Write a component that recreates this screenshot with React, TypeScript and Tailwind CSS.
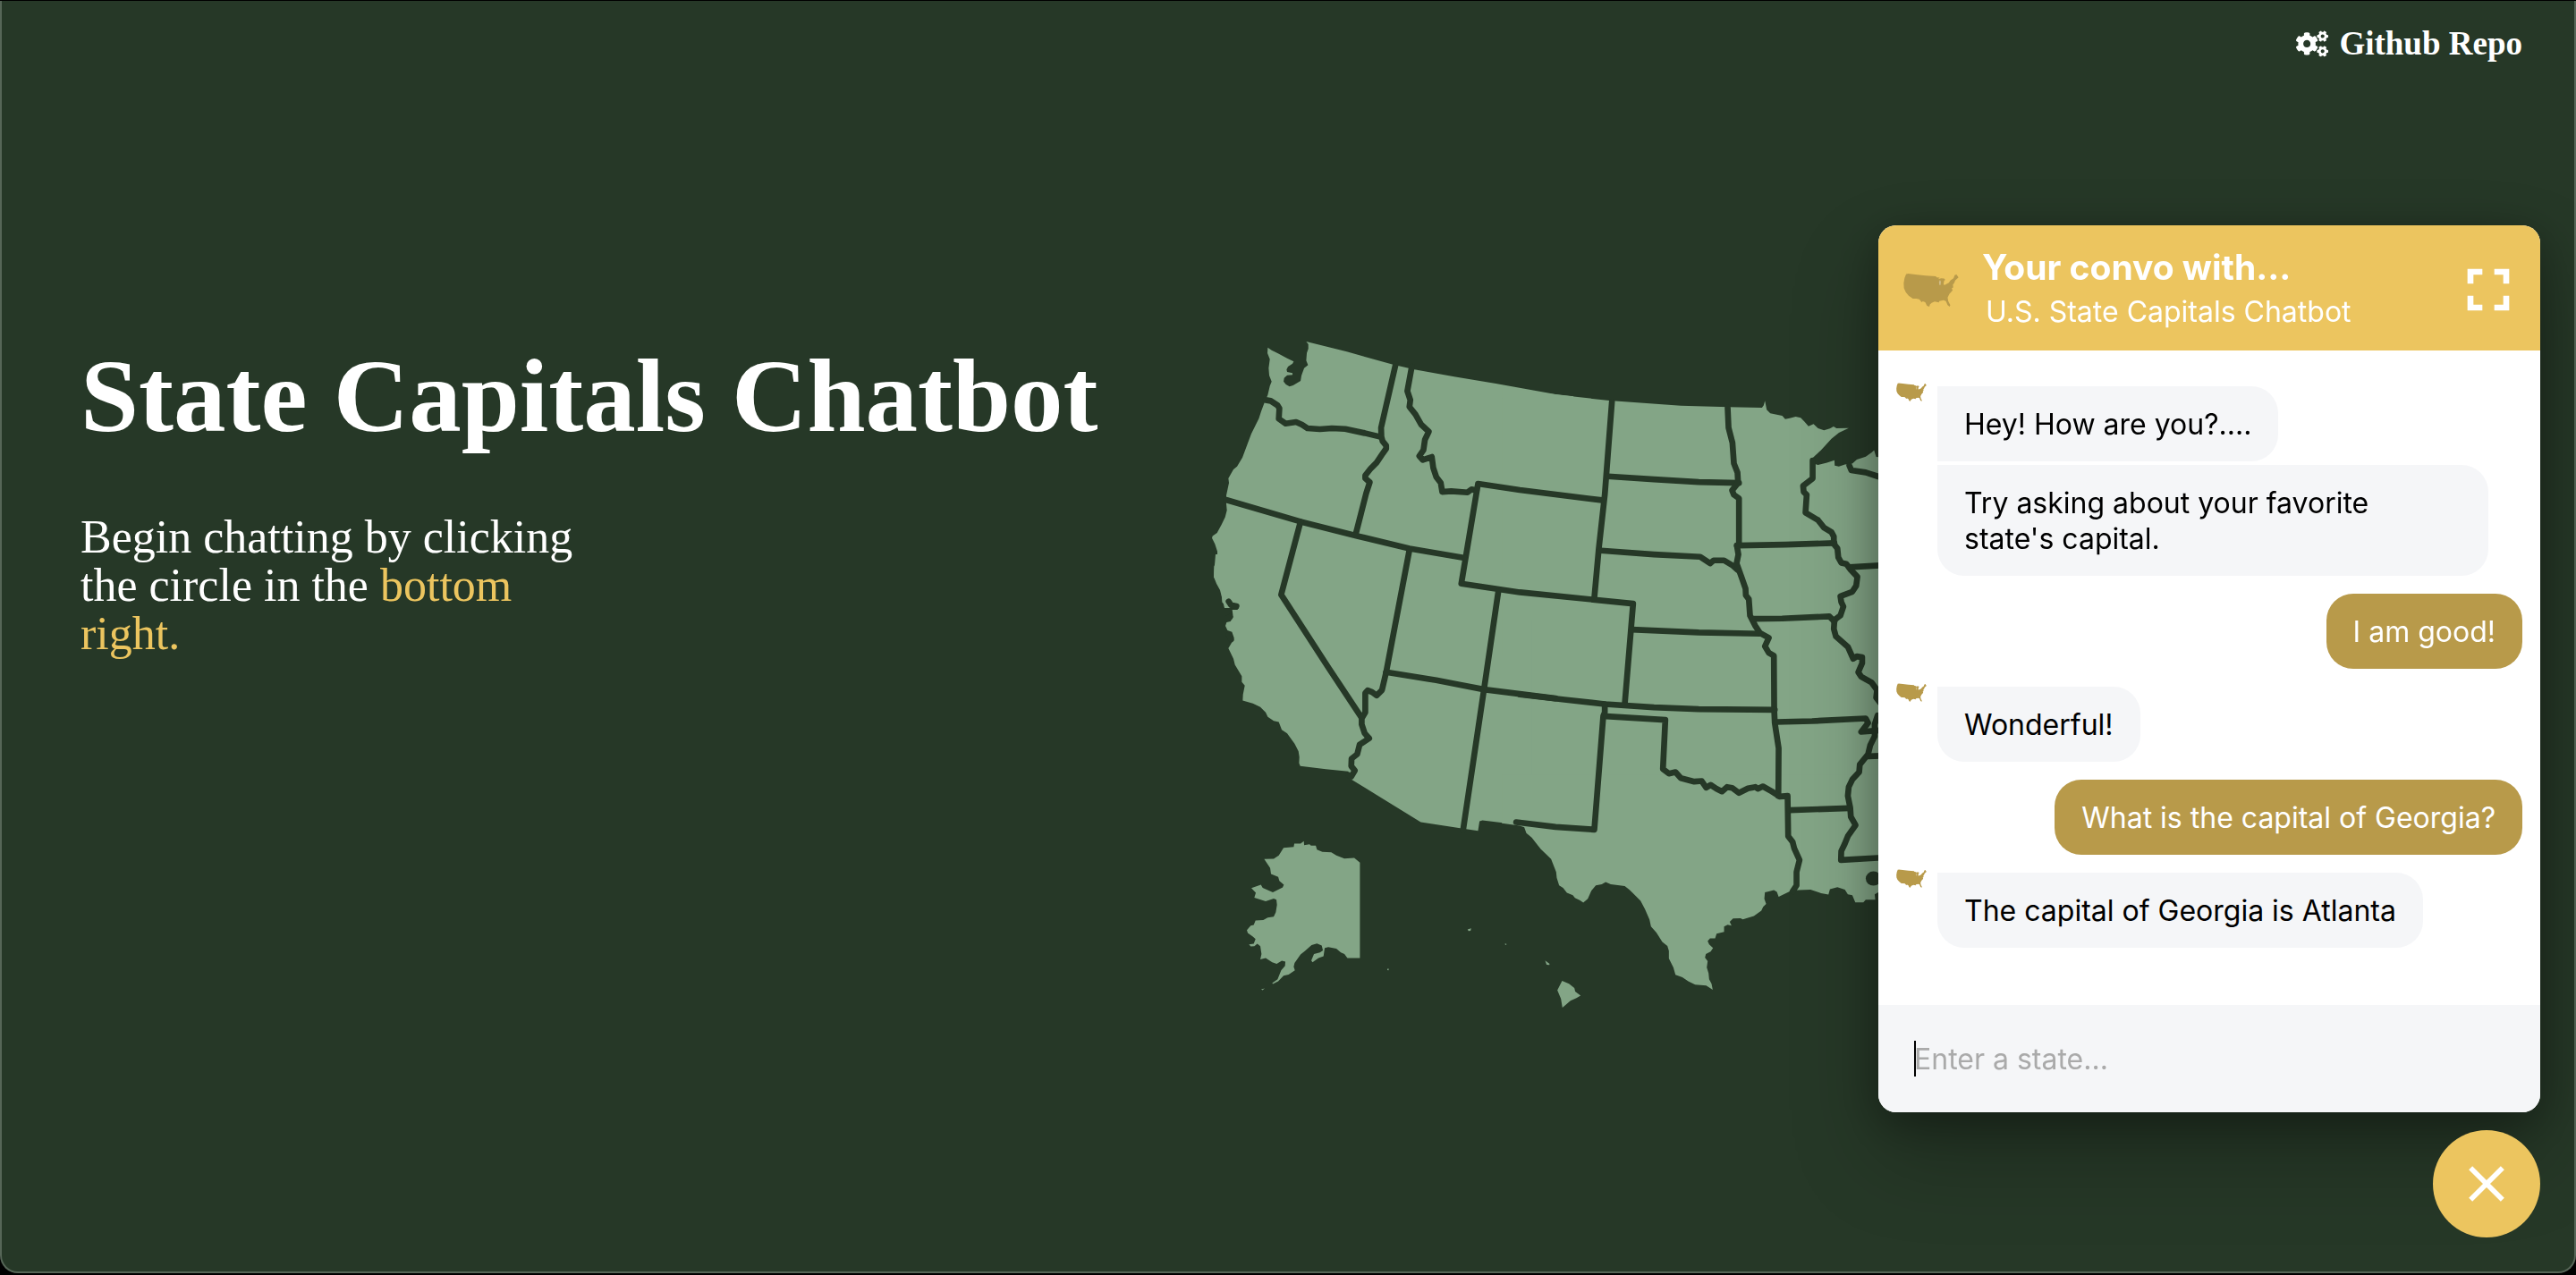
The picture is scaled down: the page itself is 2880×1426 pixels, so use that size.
import type { ReactNode } from "react";
import { FaCogs } from "react-icons/fa";
import { MdClose, MdFullscreen } from "react-icons/md";

function StatesMap() {
  return (
    <svg viewBox="0 0 4140 2400" className="block w-full" role="img" aria-label="Map of the United States">
      <g fill="#83a586">
        {/* East */}
        <path d="M2260 460 2420 540 2500 700 2700 800 2900 700 3100 640 3300 560 3420 330 3520 380 3460 560 3350 760 3250 900 3220 1150 3000 1400 2900 1550 3020 1850 2950 1950 2850 1750 2800 1640 2300 1900Z" />
        {/* Northwest */}
        <path d="M235 86 248 95 268 105 300 122 322 133 318 140 303 150 298 160 300 168 318 172 318 178 300 179 290 188 288 200 296 210 308 217 320 213 345 198 348 180 357 155 370 145 364 130 366 104 371 90 371 75 364 66 500 100 655 143 727 160 860 184 1000 207 1200 243 1260 250 1260 960 90 960 75 900 63 878 54 855 55 820 66 795 66 770 58 745 48 725 50 718 65 708 80 680 92 655 98 632 96 610 96 582 105 540 103 525 120 495 132 485 150 455 180 375 205 325 213 300 222 276 235 245 242 215 248 200 240 180 238 155 242 125 234 105Z" />
        {/* Southwest */}
        <path
          transform="translate(0 840)"
          d="M55 0 55 18 70 45 80 65 82 100 88 106 92 96 105 92 118 100 130 100 141 115 133 126 116 126 119 150 110 165 97 168 93 180 100 195 115 200 122 220 112 240 103 255 120 290 125 310 148 348 148 368 158 380 152 410 151 430 185 440 210 452 228 470 235 485 255 498 272 502 282 528 300 540 325 575 338 600 341 620 340 640 344 650 430 660 505 668 508 690 630 765 748 838 880 858 940 867 945 835 955 832 1060 845 1200 860 1260 865 1260 -60 60 -60Z"
        />
        {/* Northern plains and lakes */}
        <path
          transform="translate(1080 120)"
          d="M0 108 140 126 300 144 540 161 700 166 812 168 818 160 822 145 828 175 840 187 880 195 890 206 905 203 925 198 942 202 955 215 968 230 985 223 1000 237 1020 244 1040 238 1052 231 1062 237 1103 236 1070 252 1045 272 1010 310 978 340 985 355 1000 360 1030 352 1055 344 1056 362 1070 365 1090 358 1115 355 1130 342 1160 332 1180 318 1188 310 1195 333 1300 340 1300 1000 -60 1000 -60 100Z"
        />
        {/* South central */}
        <path d="M1120 1000H2340V1600H1120Z" />
        <path
          transform="translate(1020 1620)"
          d="M60 70 75 75 82 95 100 110 130 148 165 182 172 200 182 225 184 245 192 270 205 278 218 295 238 303 245 312 262 320 273 328 288 315 300 288 315 270 335 266 348 259 365 266 412 272 428 285 438 295 465 322 480 350 495 385 500 408 518 428 538 460 555 473 560 490 560 515 575 545 582 570 605 578 625 592 648 603 685 606 707 620 703 600 695 585 693 565 687 545 690 524 681 512 684 500 700 492 708 480 695 468 690 457 698 448 715 448 720 432 745 426 745 408 757 402 770 405 764 392 775 381 800 380 808 384 845 373 870 355 876 342 886 332 880 315 882 293 895 290 912 286 922 292 928 308 965 290 993 286 1035 284 1070 296 1095 301 1100 283 1125 276 1150 284 1160 300 1175 303 1185 327 1212 327 1220 318 1252 318 1250 300 1262 293 1400 290 1400 -100 0 -100 0 62Z"
        />
        {/* Alaska and Hawaii */}
        <g transform="translate(60 1620)">
          <path d="M163 182 195 181 212 170 228 144 245 143 262 141 264 130 285 130 296 122 297 135 315 132 320 137 336 137 340 150 358 158 388 159 405 170 432 180 465 178 484 194 484 514 442 514 432 500 420 495 405 482 378 477 366 480 362 508 345 514 325 528 321 522 330 500 350 495 360 488 356 472 340 465 322 470 300 490 285 502 265 530 262 543 266 555 245 569 228 573 210 592 192 601 190 598 208 585 220 555 233 540 234 526 222 523 205 533 190 528 168 514 150 518 154 500 150 474 140 466 130 474 118 475 112 468 128 466 134 450 125 442 108 430 105 420 118 405 128 403 134 388 160 386 175 378 195 375 202 360 206 335 204 318 195 314 168 323 130 311 135 295 120 279 152 268 158 278 192 293 225 277 229 268 214 255 210 242 186 232 183 212Z" />
          <path d="M845 418 857 414 855 422 848 423ZM970 466 975 466 975 470 971 469ZM1105 522 1120 533 1119 537 1110 536ZM1162 590 1185 600 1203 614 1206 626 1224 640 1210 648 1190 657 1163 680 1158 650 1146 622ZM576 550 581 550 580 555 576 554ZM153 619 165 616 157 622Z" />
        </g>
      </g>
      <g fill="none" stroke="#263827" strokeWidth="20" strokeLinecap="round" strokeLinejoin="round">
        <path d="M228 262 245 265 268 280 274 290 272 325 295 341 330 336 350 345 368 357 410 360 450 357 495 359 560 373 610 385" />
        <path d="M664 142 615 355 616 385 620 400 632 415 632 425 618 445 600 472 580 492 562 515 562 525 577 538 565 575 530 712" />
        <path d="M718 150 703 232 713 262 710 285 730 310 750 345 775 368 762 395 757 430 743 450 755 463 785 453 790 490 800 520 815 540 820 570 850 568 905 572 918 562 935 565" />
        <path d="M1355 598 1080 564 940 543 884 878 1080 907 1460 945 1432 1282" />
        <path d="M95 597 345 670 535 718 710 760 895 792" />
        <path d="M345 670 280 915 440 1162 548 1325" />
        <path d="M710 765 632 1175" />
        <g transform="translate(0 840)">
          <path d="M104 98 112 110 130 114M98 155 108 150M105 210 112 225" />
          <path d="M632 335 618 395 600 413 585 402 570 396 562 405 562 470 550 490 550 510 560 540 575 557 543 578 535 610 516 625 515 650 527 665 515 685 505 680" />
          <path d="M632 335 800 362 960 393 1200 423" />
          <path d="M1008 65 960 393 890 864" />
        </g>
        <g transform="translate(1080 120)">
          <path d="M309 148 285 460 265 640 250 805" />
          <path d="M295 398 450 408 600 417 735 420" />
          <path d="M272 647 450 660 605 668 638 690 650 680 685 680 715 698 730 712" />
          <path d="M697 168 700 235 713 285 718 355 730 385 732 420 712 445 718 460 735 472 735 625 728 630 733 660 727 690 745 740 757 775 758 797 768 810 772 865 790 900 805 923 835 940 822 968 835 990 852 1000 853 1180 855 1225 868 1310 867 1470" />
          <path d="M728 630 890 627 1055 622" />
          <path d="M982 345 982 405 950 430 952 450 962 460 958 520 1000 545 1020 570 1045 585 1053 600 1053 625 1065 640 1068 670 1078 688 1095 692 1110 712 1132 735 1128 765 1115 785 1075 800 1078 820 1085 835 1075 865 1055 880 1053 910 1060 935 1100 970 1118 1010 1130 1002 1148 1005 1148 1025 1135 1055 1145 1070 1180 1090 1198 1115 1195 1140 1210 1160" />
          <path d="M1105 703 1260 694" />
          <path d="M1105 362 1112 378 1160 385 1200 398 1240 410" />
          <path d="M780 876 880 875 1038 868 1055 885" />
        </g>
        <g transform="translate(1080 960)">
          <path d="M0 290 150 307 285 322 450 333 600 339 855 341" />
          <path d="M375 72 600 82 805 86" />
          <path d="M285 322 285 350 280 362 250 743 120 734 -12 718" />
          <path d="M290 363 488 375 480 540 500 555 522 550 540 570 585 582 610 580 625 602 640 593 660 606 678 615 695 600 712 603 735 620 765 605 790 600 798 606 815 598 845 615 872 632 898 630 900 765 915 785 920 805 938 845 928 885 928 930 915 950" />
          <path d="M860 382 980 379 1160 370 1168 385 1145 415 1205 410" />
          <path d="M1200 360 1190 390 1190 430 1175 460 1168 490 1140 525 1138 550 1115 575 1103 600 1100 630 1108 670 1110 700 1126 728 1100 765 1090 790 1078 815 1077 845 1200 838 1260 836" />
          <path d="M1168 497 1250 494" />
          <path d="M905 678 1105 671" />
        </g>
      </g>
      <ellipse cx="2266" cy="1867" rx="26" ry="24" fill="#263827" />
    </svg>
  );
}

function CountryIcon({ className }: { className: string }) {
  return (
    <svg viewBox="0 0 188 116" className={className} fill="#b89a4a" aria-hidden="true">
      <path d="M11 0 10 6 15 3 40 6 75 10 110 12 113 16 123 17 118 22 128 19 138 20 142 24 138 27 136 40 140 42 154 34 160 26 170 19 174 8 180 6 187 16 176 26 172 36 168 40 169 50 164 52 167 60 156 72 150 84 152 96 159 110 157 115 150 110 144 96 136 93 122 96 120 101 106 98 96 102 90 108 88 115 80 112 74 100 66 97 62 100 54 90 44 88 32 88 18 78 8 66 2 52 1 36 4 18Z" />
      <path d="M124 24 121 32 122 42 126 42 127 30Z" fill="#ffffff" fillOpacity="0.35" />
    </svg>
  );
}

function Bubble({ mine, className, children }: { mine?: boolean; className: string; children: ReactNode }) {
  return (
    <p
      className={`max-w-[616px] px-[30px] pt-[23px] pb-[21px] text-[32px] leading-10 ${
        mine ? "bg-[#b89a4a] text-white" : "bg-[#f5f6f8] text-black"
      } ${className}`}
    >
      {children}
    </p>
  );
}

function BotTurn({ children }: { children: ReactNode }) {
  return (
    <div className="flex items-start">
      <div className="w-[46px] shrink-0">
        <CountryIcon className="-mt-1 w-[34px]" />
      </div>
      <div className="flex flex-1 flex-col items-start gap-1">{children}</div>
    </div>
  );
}

function UserTurn({ children }: { children: ReactNode }) {
  return (
    <div className="flex justify-end">
      <Bubble mine className="rounded-[30px]">
        {children}
      </Bubble>
    </div>
  );
}

function ChatWidget() {
  return (
    <aside className="fixed right-10 bottom-[42px] flex flex-col items-end gap-5 font-['Inter',sans-serif]">
      <section className="w-[740px] overflow-hidden rounded-[20px] bg-white shadow-[0_48px_96px_rgba(0,0,0,0.25),0_10px_48px_rgba(0,0,0,0.3)]">
        <header className="flex h-[140px] items-center bg-[#ecc55f] pt-1 pr-[18px] pl-7 text-white">
          <CountryIcon className="w-[62px]" />
          <div className="ml-[26px] flex-1">
            <h2 className="text-[39px] leading-[50px] font-bold">Your convo with...</h2>
            <p className="pl-1 text-[32px] leading-[50px]">U.S. State Capitals Chatbot</p>
          </div>
          <button type="button" aria-label="Full screen">
            <MdFullscreen size={80} />
          </button>
        </header>
        <div className="flex flex-col gap-5 px-5 pt-10 pb-16">
          <BotTurn>
            <Bubble className="rounded-r-[30px]">Hey! How are you?....</Bubble>
            <Bubble className="rounded-[30px] rounded-tl-none">Try asking about your favorite state's capital.</Bubble>
          </BotTurn>
          <UserTurn>I am good!</UserTurn>
          <BotTurn>
            <Bubble className="rounded-[30px] rounded-tl-none">Wonderful!</Bubble>
          </BotTurn>
          <UserTurn>What is the capital of Georgia?</UserTurn>
          <BotTurn>
            <Bubble className="rounded-[30px] rounded-tl-none">The capital of Georgia is Atlanta</Bubble>
          </BotTurn>
        </div>
        <form className="flex h-[120px] items-center bg-[#f5f6f8] px-10">
          <span className="-mr-0.5 h-10 w-0.5 bg-black" />
          <input
            type="text"
            aria-label="State"
            placeholder="Enter a state..."
            className="h-14 flex-1 bg-transparent text-[32px] caret-transparent outline-none placeholder:text-[#aaaaaa]"
          />
        </form>
      </section>
      <button
        type="button"
        aria-label="Close chat"
        className="flex size-[120px] items-center justify-center rounded-full bg-[#ecc55f] text-white"
      >
        <MdClose size={68} />
      </button>
    </aside>
  );
}

export default function App() {
  return (
    <div className="min-h-screen bg-black pt-px pb-0.5 font-['Liberation_Serif',serif]">
      <main className="min-h-[calc(100vh-3px)] rounded-b-[20px] border-2 border-t-0 border-[#566657] bg-[#263827] text-white">
        <nav className="flex justify-end px-[58px] pt-7">
          <a href="#repo" className="flex items-center gap-3 text-[37px] leading-10 font-bold">
            <FaCogs size={36} />
            Github Repo
          </a>
        </nav>
        <div className="flex items-start pt-[291px]">
          <div className="w-[46.5%] pt-[18px] pl-[88px]">
            <h1 className="text-[117px] leading-[130px] font-bold whitespace-nowrap">State Capitals Chatbot</h1>
            <p className="mt-[66px] max-w-[560px] text-[52px] leading-[54px]">
              Begin chatting by clicking the circle in the <span className="text-[#ecc55f]">bottom right.</span>
            </p>
          </div>
          <div className="w-[48%]">
            <StatesMap />
          </div>
        </div>
      </main>
      <ChatWidget />
    </div>
  );
}
